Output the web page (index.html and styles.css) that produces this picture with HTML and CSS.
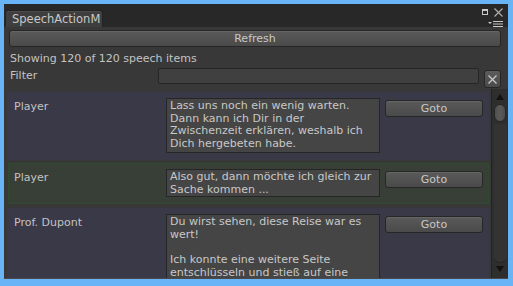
FILE: index.html
```html
<!DOCTYPE html>
<html>
<head>
<meta charset="utf-8">
<link rel="stylesheet" href="styles.css">
</head>
<body>
<div class="window">
  <div class="header">
    <div class="tab">SpeechActionM</div>
    <div class="win-icons">
      <div class="win-top">
        <svg width="6" height="6" viewBox="0 0 6 6"><rect x="0.5" y="0.5" width="5" height="5" fill="none" stroke="#c8c8c8" stroke-width="1"/><rect x="0" y="0" width="6" height="2" fill="#c8c8c8"/></svg>
        <svg width="9" height="9" viewBox="0 0 9 9"><path d="M0.5 0.5 L8.5 8.5 M8.5 0.5 L0.5 8.5" stroke="#b0b0b0" stroke-width="1.1"/></svg>
      </div>
      <svg class="menu-icon" width="15" height="6" viewBox="0 0 15 6"><path d="M0 1 L4 1 L2 3 Z" fill="#c8c8c8"/><rect x="5" y="0" width="10" height="1" fill="#c8c8c8"/><rect x="5" y="2.5" width="10" height="1" fill="#c8c8c8"/><rect x="5" y="5" width="10" height="1" fill="#c8c8c8"/></svg>
    </div>
  </div>
  <div class="content">
    <div class="btn refresh">Refresh</div>
    <div class="status">Showing 120 of 120 speech items</div>
    <div class="filter-row">
      <span class="filter-label">Filter</span>
      <div class="filter-input"></div>
      <div class="clear-btn"><svg width="9" height="9" viewBox="0 0 9 9"><path d="M0.5 0.5 L8.5 8.5 M8.5 0.5 L0.5 8.5" stroke="#c8c8c8" stroke-width="1.3"/></svg></div>
    </div>
    <div class="list-area">
      <div class="items">
        <div class="item">
          <div class="speaker">Player</div>
          <div class="textbox tall">Lass uns noch ein wenig warten.
Dann kann ich Dir in der
Zwischenzeit erklären, weshalb ich
Dich hergebeten habe.</div>
          <div class="btn goto">Goto</div>
        </div>
        <div class="item selected">
          <div class="speaker">Player</div>
          <div class="textbox">Also gut, dann möchte ich gleich zur
Sache kommen ...</div>
          <div class="btn goto">Goto</div>
        </div>
        <div class="item">
          <div class="speaker">Prof. Dupont</div>
          <div class="textbox long">Du wirst sehen, diese Reise war es
wert!

Ich konnte eine weitere Seite
entschlüsseln und stieß auf eine</div>
          <div class="btn goto">Goto</div>
        </div>
      </div>
      <div class="scrollbar">
        <div class="arrow up"></div>
        <div class="thumb"></div>
        <div class="track-fill"></div>
        <div class="arrow down"></div>
      </div>
    </div>
  </div>
</div>
</body>
</html>
```
FILE: styles.css
```css
* { box-sizing: border-box; }
html, body { margin: 0; padding: 0; }
body {
  width: 513px;
  height: 286px;
  background: #68b4f7;
  padding: 4px 5px 7px 4px;
  font-family: "DejaVu Sans", Verdana, sans-serif;
  font-size: 11px;
  color: #c3c3c3;
  overflow: hidden;
}
.window {
  width: 504px;
  height: 275px;
  background: #383838;
  display: flex;
  flex-direction: column;
  overflow: hidden;
  border-bottom: 1px solid #4a4a4a;
}
.header {
  height: 23px;
  background: #282828;
  display: flex;
  justify-content: space-between;
  align-items: flex-end;
  flex: none;
}
.tab {
  margin-left: 1px;
  width: 98px;
  height: 17px;
  background: #3e3e3e;
  border: 1px solid #232323;
  border-bottom: none;
  border-radius: 3px 3px 0 0;
  box-shadow: inset 0 1px 0 #4c4c4c;
  padding: 1px 0 0 6px;
  line-height: 14px;
  font-size: 11.5px;
  color: #c8c8c8;
  white-space: nowrap;
  overflow: hidden;
}
.win-icons {
  height: 23px;
  padding: 3px 5px 0 0;
  display: flex;
  flex-direction: column;
  align-items: flex-end;
}
.win-top {
  display: flex;
  align-items: center;
  gap: 6px;
  height: 10px;
}
.menu-icon { margin-top: 4px; }
.content {
  flex: 1;
  display: flex;
  flex-direction: column;
  min-height: 0;
}
.btn {
  background: linear-gradient(#5a5a5a, #4a4a4a);
  border: 1px solid #262626;
  border-radius: 3px;
  box-shadow: inset 0 1px 0 #666;
  color: #c8c8c8;
  text-align: center;
  line-height: 15px;
}
.refresh {
  margin: 3px 7px 0 5px;
  height: 17px;
}
.status {
  margin: 4px 0 0 6px;
  height: 15px;
  line-height: 15px;
}
.filter-row {
  display: flex;
  align-items: flex-start;
  height: 21px;
  margin-top: 2px;
}
.filter-label {
  width: 154px;
  padding-left: 6px;
  line-height: 16px;
}
.filter-input {
  width: 321px;
  height: 16px;
  background: #404040;
  border: 1px solid #262626;
  border-radius: 2px;
}
.clear-btn {
  margin: 2px 0 0 5px;
  width: 17px;
  height: 18px;
  background: linear-gradient(#5c5c5c, #4a4a4a);
  border: 1px solid #262626;
  border-radius: 3px;
  display: flex;
  align-items: center;
  justify-content: center;
}
.list-area {
  flex: 1;
  display: flex;
  min-height: 0;
}
.items {
  flex: 1;
  padding: 3px 0 0 3px;
  display: flex;
  flex-direction: column;
  gap: 3px;
  overflow: hidden;
}
.item {
  flex: none;
  width: 482px;
  background: #393947;
  display: flex;
  align-items: flex-start;
  padding: 5px 0 6px 6px;
  border: 1px solid #393947;
}
.item.selected {
  background: #383f37;
  border-color: #2f4a2e;
  width: 481px;
  margin-left: 1px;
  margin-bottom: 1px;
  padding-left: 5px;
}
.speaker {
  width: 152px;
  line-height: 15px;
  padding-top: 1px;
}
.textbox {
  width: 214px;
  background: #454545;
  border: 1px solid #262626;
  padding: 1px 3px 0 3px;
  line-height: 12.6px;
  white-space: pre;
  overflow: hidden;
  color: #c8c8c8;
}
.textbox.tall { height: 55px; }
.textbox.long { height: 80px; }
.goto {
  width: 98px;
  height: 17px;
  margin: 2px 0 0 5px;
}
.scrollbar {
  width: 17px;
  margin-left: 2px;
  background: #2e2e2e;
  border-left: 1px solid #232323;
  display: flex;
  flex-direction: column;
  align-items: center;
}
.arrow {
  width: 0;
  height: 0;
  border-left: 4px solid transparent;
  border-right: 4px solid transparent;
}
.arrow.up {
  margin-top: 5px;
  border-bottom: 6px solid #111;
}
.arrow.down {
  margin-bottom: 6px;
  border-top: 6px solid #111;
}
.thumb {
  margin-top: 4px;
  width: 12px;
  height: 18px;
  border-radius: 6px;
  background: linear-gradient(90deg, #505050, #5a5a5a 50%, #4c4c4c);
  border: 1px solid #262626;
}
.track-fill {
  flex: 1;
  width: 13px;
  margin-top: 2px;
  margin-bottom: 3px;
  background: #333;
  border-radius: 0 0 6px 6px;
  border-bottom: 1px solid #262626;
}
```
